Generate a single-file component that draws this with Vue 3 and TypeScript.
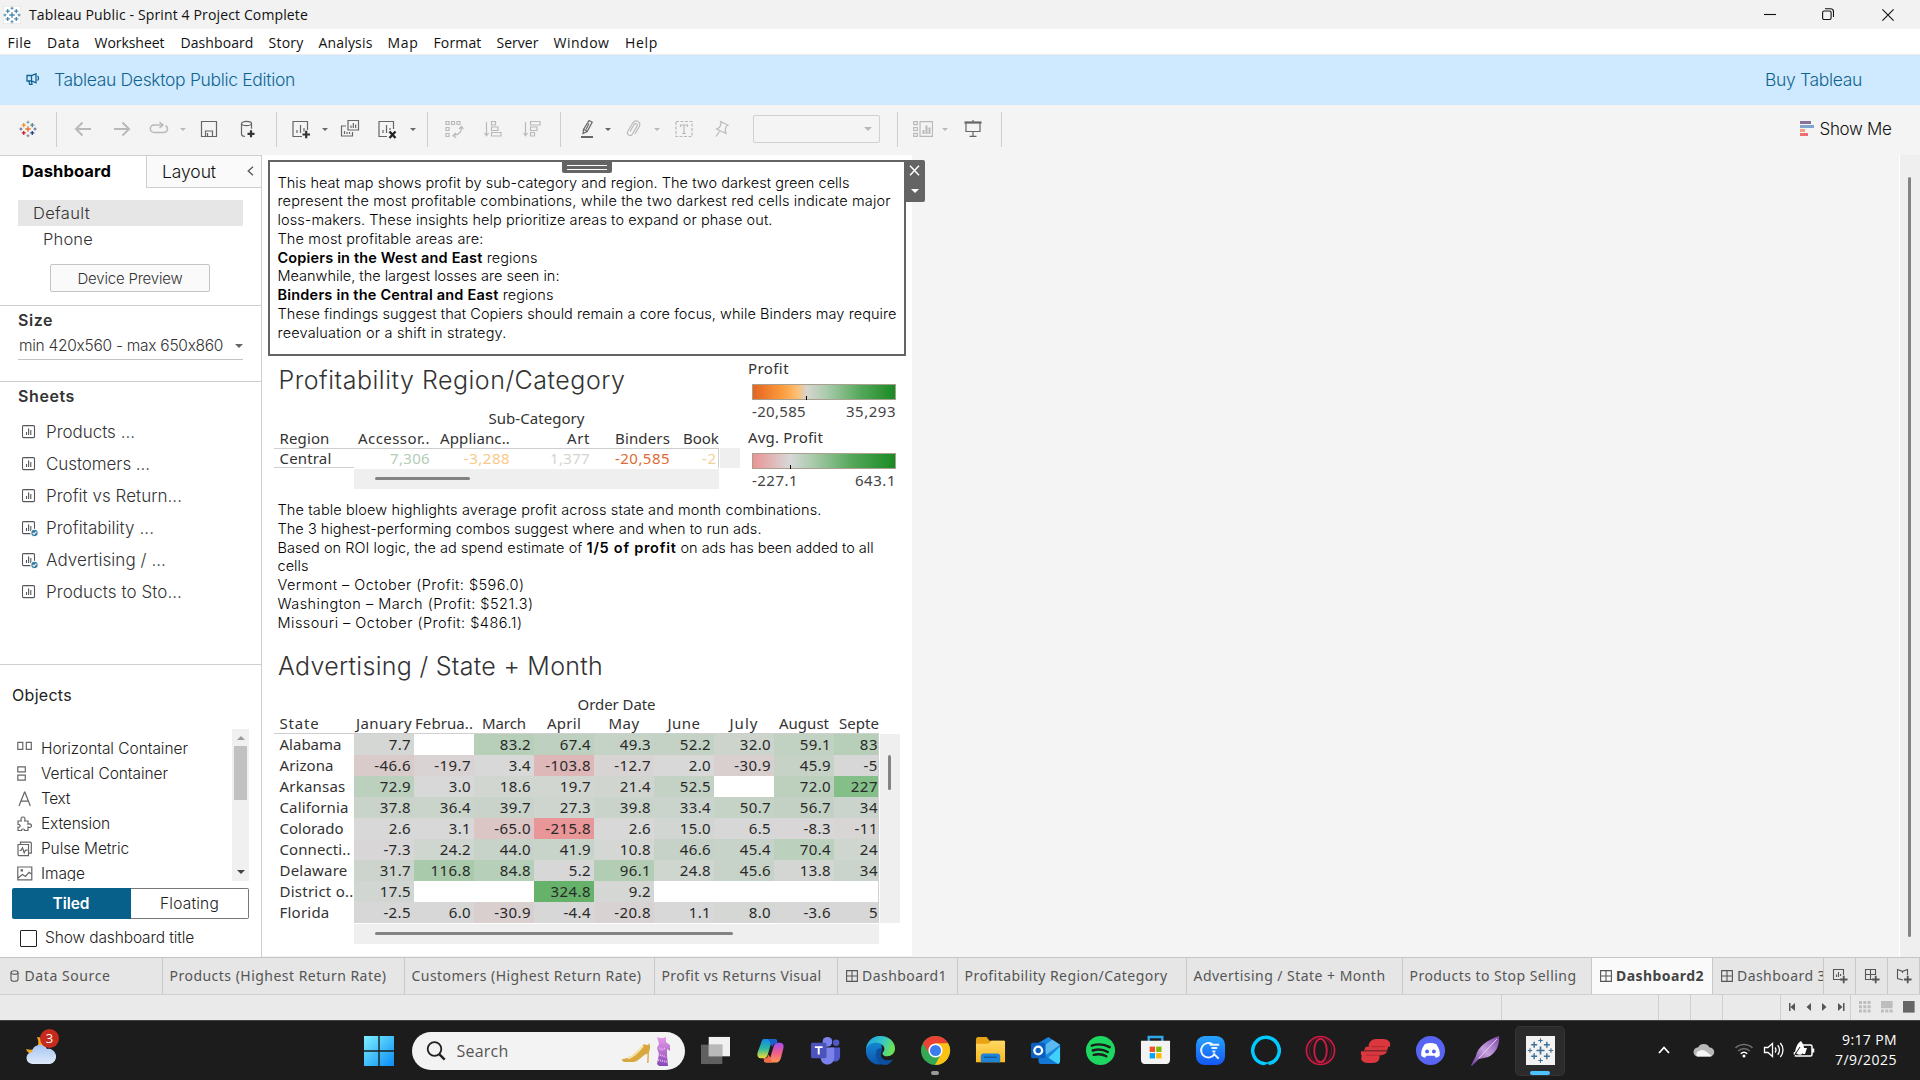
<script setup lang="ts">
import type { Directive } from 'vue'

// Tracks a text run so that it fills the given width in pixels.
const vFit: Directive<HTMLElement, number> = {
  mounted(el, { value }) {
    const n = (el.textContent ?? '').length
    if (!n) return
    const w = el.getBoundingClientRect().width
    el.style.letterSpacing = `${((value - w) / n).toFixed(3)}px`
  },
}

interface Label { t: string; w: number }
interface Segment extends Label { b?: boolean }

const menus: Label[] = [
  { t: 'File', w: 24 }, { t: 'Data', w: 33 }, { t: 'Worksheet', w: 70 }, { t: 'Dashboard', w: 73 },
  { t: 'Story', w: 35 }, { t: 'Analysis', w: 54 }, { t: 'Map', w: 31 }, { t: 'Format', w: 48 },
  { t: 'Server', w: 42 }, { t: 'Window', w: 56 }, { t: 'Help', w: 33 },
]

const logo: [number, number, number, number, string][] = [
  [12, 12, 3.6, 1.5, '#e8762c'], [6.3, 6.8, 2.7, 1.3, '#eb912c'], [17.7, 6.8, 2.7, 1.3, '#59879b'],
  [6.3, 17.2, 2.7, 1.3, '#c72035'], [17.7, 17.2, 2.7, 1.3, '#1f447e'], [12, 3, 2, 1, '#7199a6'],
  [12, 21, 2, 1, '#7b848f'], [2.6, 12, 2, 1, '#5c6692'], [21.4, 12, 2, 1, '#5b6591'],
]
const plus = (x: number, y: number, r: number) => `M${x - r} ${y}h${2 * r}M${x} ${y - r}v${2 * r}`

const sheets = [
  { t: 'Products ...', w: 89, used: false }, { t: 'Customers ...', w: 104, used: false },
  { t: 'Profit vs Return...', w: 136, used: false }, { t: 'Profitability ...', w: 108, used: true },
  { t: 'Advertising / ...', w: 120, used: true }, { t: 'Products to Sto...', w: 136, used: false },
]

const objects = [
  { t: 'Horizontal Container', w: 147, d: 'M.8 1.3h5v7h-5zM9.3 1.3h5v7h-5z' },
  { t: 'Vertical Container', w: 127, d: 'M.8.8h7.5v5h-7.5zM.8 9.2h7.5v5h-7.5z' },
  { t: 'Text', w: 29, d: 'M2 15L7.5 1.2h.4L13.3 15M3.8 10.2h7.8' },
  { t: 'Extension', w: 69, d: 'M1 5h3.3c-1-2.7.3-4 1.7-4s2.7 1.3 1.7 4H11v3.3c2-1 3.5 0 3.5 1.4s-1.5 2.4-3.5 1.4V14.500H7.500c.6-2-3.600-2-3 0H1V11.200c2.800.6 2.800-3.400 0-2.800z' },
  { t: 'Pulse Metric', w: 88, d: 'M1 3.500h10.500v11.200H2.200A1.200 1.200 0 0 1 1 13.500zM3.500 3.300V1.200h9.800a1 1 0 0 1 1 1v9.900h-2.700M2.500 9.500H4l1.500-2.700 1.700 5 1.300-2.700h2' },
  { t: 'Image', w: 44, d: 'M.8 1h14v12.800H.8zM1 12l4.500-3.500 3 2 3.500-4.300 2.600 1.800M4.200 3.800h1.200v1.200H4.200z' },
]

const intro: Segment[][] = [
  [{ t: 'This heat map shows profit by sub-category and region. The two darkest green cells', w: 572 }],
  [{ t: 'represent the most profitable combinations, while the two darkest red cells indicate major', w: 613 }],
  [{ t: 'loss-makers. These insights help prioritize areas to expand or phase out.', w: 495 }],
  [{ t: 'The most profitable areas are:', w: 206 }],
  [{ t: 'Copiers in the West and East', w: 205, b: true }, { t: ' regions', w: 55 }],
  [{ t: 'Meanwhile, the largest losses are seen in:', w: 282 }],
  [{ t: 'Binders in the Central and East', w: 221, b: true }, { t: ' regions', w: 55 }],
  [{ t: 'These findings suggest that Copiers should remain a core focus, while Binders may require', w: 619 }],
  [{ t: 'reevaluation or a shift in strategy.', w: 229 }],
]
const notes: Segment[][] = [
  [{ t: 'The table bloew highlights average profit across state and month combinations.', w: 544 }],
  [{ t: 'The 3 highest-performing combos suggest where and when to run ads.', w: 484 }],
  [{ t: 'Based on ROI logic, the ad spend estimate of ', w: 309 }, { t: '1/5 of profit', w: 90, b: true }, { t: ' on ads has been added to all', w: 197 }],
  [{ t: 'cells', w: 31 }],
  [{ t: 'Vermont – October (Profit: $596.0)', w: 247 }],
  [{ t: 'Washington – March (Profit: $521.3)', w: 256 }],
  [{ t: 'Missouri – October (Profit: $486.1)', w: 245 }],
]

const categories = [
  { t: 'Accessor..', w: 72, v: '7,306', vw: 40, c: '#b3cdb5' },
  { t: 'Applianc..', w: 70, v: '-3,288', vw: 46, c: '#f9c987' },
  { t: 'Art', w: 23, v: '1,377', vw: 40, c: '#d3d6cd' },
  { t: 'Binders', w: 55, v: '-20,585', vw: 55, c: '#dd6a35' },
]

const months: Label[] = [
  { t: 'January', w: 56 }, { t: 'Februa..', w: 58 }, { t: 'March', w: 44 }, { t: 'April', w: 34 },
  { t: 'May', w: 31 }, { t: 'June', w: 33 }, { t: 'July', w: 29 }, { t: 'August', w: 50 }, { t: 'Septe', w: 40 },
]
const states: { t: string; w: number; v: string[] }[] = [
  { t: 'Alabama', w: 62, v: ['7.7', '', '83.2', '67.4', '49.3', '52.2', '32.0', '59.1', '83'] },
  { t: 'Arizona', w: 54, v: ['-46.6', '-19.7', '3.4', '-103.8', '-12.7', '2.0', '-30.9', '45.9', '-5'] },
  { t: 'Arkansas', w: 66, v: ['72.9', '3.0', '18.6', '19.7', '21.4', '52.5', '', '72.0', '227'] },
  { t: 'California', w: 69, v: ['37.8', '36.4', '39.7', '27.3', '39.8', '33.4', '50.7', '56.7', '34'] },
  { t: 'Colorado', w: 64, v: ['2.6', '3.1', '-65.0', '-215.8', '2.6', '15.0', '6.5', '-8.3', '-11'] },
  { t: 'Connecti..', w: 71, v: ['-7.3', '24.2', '44.0', '41.9', '10.8', '46.6', '45.4', '70.4', '24'] },
  { t: 'Delaware', w: 68, v: ['31.7', '116.8', '84.8', '5.2', '96.1', '24.8', '45.6', '13.8', '34'] },
  { t: 'District o..', w: 74, v: ['17.5', '', '', '324.8', '9.2', '', '', '', ''] },
  { t: 'Florida', w: 50, v: ['-2.5', '6.0', '-30.9', '-4.4', '-20.8', '1.1', '8.0', '-3.6', '5'] },
]

const ramp: [number, number[]][] = [
  [-227, [233, 147, 148]], [-104, [222, 184, 185]], [-47, [218, 203, 203]], [0, [216, 216, 216]],
  [50, [197, 210, 198]], [83, [183, 207, 185]], [117, [169, 203, 171]], [227, [132, 190, 136]],
  [325, [103, 178, 107]], [643, [26, 139, 36]],
]
function shade(v: string): string {
  if (!v) return '#ffffff'
  const n = Number(v)
  const i = Math.max(1, ramp.findIndex(([stop]) => n <= stop))
  const [a, ca] = ramp[i - 1]
  const [b, cb] = ramp[i]
  const k = (n - a) / (b - a)
  return `rgb(${ca.map((c, j) => Math.round(c + (cb[j] - c) * k)).join(',')})`
}

const digitWidth = (s: string) => [...s].reduce((n, c) => n + (c === '.' ? 4 : c === '-' ? 5.4 : 9.1), 0)

const tabs = [
  { t: 'Data Source', w: 86, k: 'data' }, { t: 'Products (Highest Return Rate)', w: 217, k: '' },
  { t: 'Customers (Highest Return Rate)', w: 230, k: '' }, { t: 'Profit vs Returns Visual', w: 160, k: '' },
  { t: 'Dashboard1', w: 85, k: 'sheetgrid' }, { t: 'Profitability Region/Category', w: 203, k: '' },
  { t: 'Advertising / State + Month', w: 192, k: '' }, { t: 'Products to Stop Selling', w: 167, k: '' },
  { t: 'Dashboard2', w: 88, k: 'sheetgrid active' }, { t: 'Dashboard 3', w: 89, k: 'sheetgrid' },
]
</script>

<template>
  <div class="screen">
    <header class="titlebar">
      <svg class="appicon" viewBox="0 0 24 24"><rect width="24" height="24" fill="#fff" stroke="#ccc" /><path v-for="(p, i) in logo" :key="i" :d="plus(p[0], p[1], p[2])" stroke="#4a86ad" :stroke-width="p[3] + .3" /></svg>
      <span v-fit="279" class="caption">Tableau Public - Sprint 4 Project Complete</span>
      <div class="winbtns">
        <svg viewBox="0 0 12 12"><path d="M0 5.500h12" /></svg>
        <svg viewBox="0 0 12 12"><rect x=".6" y="3" width="8.500" height="8.500" rx="1.500" /><path d="M3 .7h5.500a3 3 0 0 1 3 3V9" /></svg>
        <svg viewBox="0 0 12 12"><path d="M.4.4l11.200 11.200M11.600.4L.4 11.600" /></svg>
      </div>
    </header>

    <nav class="menubar"><span v-for="m in menus" :key="m.t"><span v-fit="m.w" class="run">{{ m.t }}</span></span></nav>

    <div class="banner">
      <svg class="horn" viewBox="0 0 14 12"><path d="M1 2.500h4.500L10 .8v9L5.500 8H1zM3 8l.6 3.500H6L5.500 8M5.500 2.500V8M11.500 3a3 3 0 0 1 0 4.500" /></svg>
      <span v-fit="241" class="run">Tableau Desktop Public Edition</span>
      <span v-fit="97" class="run buy">Buy Tableau</span>
    </div>

    <div class="toolbar">
      <svg class="logo" viewBox="0 0 24 24"><path v-for="(p, i) in logo" :key="i" :d="plus(p[0], p[1], p[2])" :stroke="p[4]" :stroke-width="p[3] + .4" /></svg>
      <i class="sep" />
      <svg class="ic off thick" viewBox="0 0 20 20"><path d="M18 10H3M9.500 3.500L3 10l6.500 6.500" /></svg>
      <svg class="ic off thick" viewBox="0 0 20 20"><path d="M2 10h15M10.500 3.500L17 10l-6.500 6.500" /></svg>
      <svg class="ic off" viewBox="0 0 20 20"><path d="M13 6H5a3.600 3.600 0 0 0 0 7.400h10A3.600 3.600 0 0 0 16.500 6.600M10.500 3L14 6l-3.500 3" stroke-width="1.500" /></svg>
      <b class="tri off" />
      <svg class="ic" viewBox="0 0 20 20"><path d="M2.500 2.500h15v15h-15zM6.500 17v-5h7v5M8.500 14v3" /></svg>
      <svg class="ic" viewBox="0 0 20 20"><path d="M3.500 4.800v10.500c0 1.200 1.500 2 3.500 2.200M13.500 4.800v5" /><ellipse cx="8.500" cy="4.500" rx="5" ry="2.200" /><path d="M9.500 14.800h7M13 11.300v7" stroke="#333" stroke-width="2.200" /></svg>
      <i class="sep" />
      <svg class="ic" viewBox="0 0 20 20"><path d="M11 17.500H2V2.500h14.500V11M6 14v-3M9.500 14V6M13 12.500V9" /><path d="M11.500 15.500h7.500M15.200 11.800v7.400" stroke="#333" stroke-width="2.200" /></svg>
      <b class="tri" />
      <svg class="ic" viewBox="0 0 20 20"><path d="M8 1.500h10.500v9.500H8zM6 7H1.500v10h11v-4M11 9V6.500M13.300 9V4M15.600 9V5.500M4.500 15v-3M7 15v-2M9.500 15v-2" /></svg>
      <svg class="ic" viewBox="0 0 20 20"><path d="M10 17.500H2V2.500h14.500V10M6 14v-3M9.500 14V6M13 11V9" /><path d="M12.500 12.500l6 6.500M18.500 12.500l-6 6.500" stroke="#222" stroke-width="2.300" /></svg>
      <b class="tri" />
      <i class="sep" />
      <svg class="ic off" viewBox="0 0 20 20"><path d="M2 2.500h3v3H2zM7.500 2.500h3v3h-3zM13 2.500h3v3h-3zM2 8.500h3v3H2zM2 14.500h3v3H2zM17.500 8c.5 4.500-2 7.500-8 8.500M15 10l2.500-2.500L19.500 10M12 14l-3 2.700 3.200 2" /></svg>
      <svg class="ic off" viewBox="0 0 20 20"><path d="M3.500 3v13M1.500 14l2 2.700L5.500 14M8.500 2.500h4v3.500h-4zM8.500 8h6.500v3.500H8.500zM8.500 13.500h9.500V17H8.500z" /></svg>
      <svg class="ic off" viewBox="0 0 20 20"><path d="M3.500 3v13M1.500 14l2 2.700L5.500 14M8.500 2.500h9.500v3.500H8.500zM8.500 8h6.500v3.500H8.500zM8.500 13.500h4V17h-4z" /></svg>
      <i class="sep" />
      <svg class="ic" viewBox="0 0 20 20"><path d="M12 1.500l3.200 1.700-5 9.300L6 14.500 6.500 10.500zM7 10.500l3 1.700M12 4.500l-3 6" /><path d="M4 18h12" stroke-width="2" /></svg>
      <b class="tri" />
      <svg class="ic off" viewBox="0 0 20 20"><path d="M7 12.500l4-7c1.300-2 4 -.5 3 1.500l-4.500 8c-2 3.200-6.500.5-4.800-2.500l5-8.500c3-4.500 9-.8 6.500 3.500L12 15" /></svg>
      <b class="tri off" />
      <svg class="ic off" viewBox="0 0 20 20"><path d="M2 2.500h16v15H2z" stroke-dasharray="3 1.500" /><path d="M6.500 8V6h7v2M10 6v8.500M8 14.500h4" /></svg>
      <svg class="ic off" viewBox="0 0 20 20"><path d="M9.500 2.500l7.500 3.500-2 1.500-.8 4 .8 3-9.500-4.500 3-1.500 1.500-3.500zM8.500 12.500L5 17.500" /></svg>
      <div class="combo"><b class="tri off big" /></div>
      <i class="sep" />
      <svg class="ic off" viewBox="0 0 20 20"><path d="M.7 2.700h3.600v3H.7zM.7 8.500h3.600v3H.7zM.7 14.300h3.600v3H.7zM7 2.700h12.500v14.600H7z" /><path d="M10.500 15v-4M13.500 15V6.500M16.500 15V8.500" stroke-width="2" /></svg>
      <b class="tri off" />
      <svg class="ic" viewBox="0 0 20 20"><path d="M1.500 3.500h17" stroke-width="2.200" /><path d="M3 4v8.500h14V4M10 12.500V17M6.500 17.300h7M10 1v2" /></svg>
      <i class="sep" />
      <div class="showme">
        <svg width="15" height="16" viewBox="0 0 15 16"><path d="M0 0h11v3H0z" fill="#87719b" /><path d="M0 4h14v3H0z" fill="#80a4cd" /><path d="M0 8h5v3H0z" fill="#f2a37f" /><path d="M0 12h8v3H0z" fill="#f36b77" /></svg>
        <span v-fit="72" class="run">Show Me</span>
      </div>
    </div>

    <main class="work">
      <aside class="panel">
        <div class="ptabs">
          <div class="ptab on"><span v-fit="89" class="run">Dashboard</span></div>
          <div class="ptab"><span v-fit="54" class="run">Layout</span><svg width="7" height="10" viewBox="0 0 7 10"><path d="M6 .7L1.200 5 6 9.300" /></svg></div>
        </div>
        <div class="device on"><span v-fit="57" class="run">Default</span></div>
        <div class="device phone"><span v-fit="50" class="run">Phone</span></div>
        <button class="preview"><span v-fit="105" class="run">Device Preview</span></button>
        <section class="size">
          <h3><span v-fit="35" class="run">Size</span></h3>
          <div class="select"><span v-fit="208" class="run">min 420x560 - max 650x860</span><b class="tri big" /></div>
        </section>
        <section class="sheets">
          <h3><span v-fit="57" class="run">Sheets</span></h3>
          <div v-for="s in sheets" :key="s.t" class="sheet">
            <svg width="17" height="17" viewBox="0 0 17 17"><path d="M1.500.6h10a1 1 0 0 1 1 1v10a1 1 0 0 1-1 1h-10a1 1 0 0 1-1-1v-10a1 1 0 0 1 1-1zM4.500 10V7M6.600 10V3.500M8.800 10V5" /><g v-if="s.used"><circle cx="12.500" cy="12" r="3.700" fill="#3a7fa3" stroke="#fff" /><path d="M10.700 12l1.300 1.300 2.400-2.600" stroke="#fff" /></g></svg>
            <span v-fit="s.w" class="run">{{ s.t }}</span>
          </div>
        </section>
        <section class="objects">
          <h4><span v-fit="60" class="run">Objects</span></h4>
          <div class="olist">
            <div class="oitems">
              <div v-for="o in objects" :key="o.t" class="obj">
                <svg width="16" height="16" viewBox="0 0 16 16"><path :d="o.d" /></svg><span v-fit="o.w" class="run">{{ o.t }}</span>
              </div>
            </div>
            <div class="obar"><b class="up" /><div class="othumb" /><b class="down" /></div>
          </div>
          <div class="mode"><div class="m on"><span v-fit="37" class="run">Tiled</span></div><div class="m"><span v-fit="59" class="run">Floating</span></div></div>
          <label class="check"><i /><span v-fit="149" class="run">Show dashboard title</span></label>
        </section>
      </aside>

      <div class="canvas">
        <div class="board">
          <div class="selbox">
            <p v-for="(line, i) in intro" :key="i"><span v-for="s in line" :key="s.t" v-fit="s.w" :class="{ strong: s.b }">{{ s.t }}</span></p>
            <div class="grip" />
            <div class="boxtools"><svg width="11" height="11" viewBox="0 0 11 11"><path d="M1 .8l9 9.400M10 .8L1 10.200" /></svg><b /></div>
          </div>

          <div class="row1">
            <div class="viz profit">
              <h2><span v-fit="347" class="run">Profitability Region/Category</span></h2>
              <div class="axis"><span v-fit="96" class="run">Sub-Category</span></div>
              <div class="heads">
                <div class="rowhead"><span v-fit="50" class="run">Region</span></div>
                <div v-for="c in categories" :key="c.t" class="cat"><span v-fit="c.w" class="run">{{ c.t }}</span></div>
                <div class="cat last"><span v-fit="43" class="run">Bookc</span></div>
              </div>
              <div class="vals">
                <div class="rowhead"><span v-fit="52" class="run">Central</span></div>
                <div v-for="c in categories" :key="c.t" class="cat" :style="{ color: c.c }"><span v-fit="c.vw" class="run">{{ c.v }}</span></div>
                <div class="cat last2"><span v-fit="15" class="run">-2</span></div>
                <div class="vtrack" />
              </div>
              <div class="htrack"><i /></div>
            </div>
            <div class="legends">
              <div class="ltitle"><span v-fit="41" class="run">Profit</span></div>
              <div class="gradient g1"><i /></div>
              <div class="range"><span v-fit="54" class="run">-20,585</span><span v-fit="50" class="run">35,293</span></div>
              <div class="ltitle"><span v-fit="75" class="run">Avg. Profit</span></div>
              <div class="gradient g2"><i /></div>
              <div class="range"><span v-fit="46" class="run">-227.1</span><span v-fit="41" class="run">643.1</span></div>
            </div>
          </div>

          <div class="notes"><p v-for="(line, i) in notes" :key="i"><span v-for="s in line" :key="s.t" v-fit="s.w" :class="{ strong: s.b }">{{ s.t }}</span></p></div>

          <div class="viz adv">
            <h2><span v-fit="325" class="run">Advertising / State + Month</span></h2>
            <div class="axis"><span v-fit="78" class="run">Order Date</span></div>
            <div class="heads">
              <div class="rowhead"><span v-fit="40" class="run">State</span></div>
              <div v-for="m in months" :key="m.t" class="mon"><span v-fit="m.w" class="run">{{ m.t }}</span></div>
            </div>
            <div class="body">
              <div class="grid">
                <div v-for="s in states" :key="s.t" class="srow">
                  <div class="rowhead"><span v-fit="s.w" class="run">{{ s.t }}</span></div>
                  <div v-for="(v, i) in s.v" :key="i" class="cell" :style="{ background: shade(v) }"><span v-if="v" v-fit="digitWidth(v)" class="run">{{ v }}</span></div>
                </div>
              </div>
              <div class="vtrack"><i /></div>
            </div>
            <div class="htrack"><i /></div>
          </div>
        </div>
        <div class="pagebar"><i /></div>
      </div>
    </main>

    <div class="tabs">
      <div v-for="t in tabs" :key="t.t" class="tab" :class="t.k">
        <svg v-if="t.k === 'data'" width="9" height="12" viewBox="0 0 9 12"><ellipse cx="4.500" cy="2.500" rx="3.500" ry="1.800" /><path d="M1 2.500v7c0 2.300 7 2.300 7 0v-7" /></svg>
        <svg v-else-if="t.k" width="12" height="12" viewBox="0 0 12 12"><path d="M.6.6h10.800v10.800H.6zM6 .6v10.800M.6 6h10.800" /></svg>
        <span v-fit="t.w" class="run">{{ t.t }}</span>
      </div>
      <div class="tab add"><svg width="16" height="16" viewBox="0 0 16 16"><path d="M8 11.500H1.500V1.500h10V7M4.500 9V6.500M6.500 9V4M8.600 8V6" /><path d="M8 11.500h7.500M11.700 7.700v7.500" stroke-width="1.800" /></svg></div>
      <div class="tab add"><svg width="16" height="16" viewBox="0 0 16 16"><path d="M8 11.500H1.500V1.500h10V7M6.500 1.500v10M1.500 6.500h10" /><path d="M8 11.500h7.500M11.700 7.700v7.500" stroke-width="1.800" /></svg></div>
      <div class="tab add"><svg width="16" height="16" viewBox="0 0 16 16"><path d="M7 12L1.500 10.500v-9L6.500 3.300 11.500 1.500V7M6.500 3.300V5" /><path d="M8 11.500h7.500M11.700 7.700v7.500" stroke-width="1.800" /></svg></div>
    </div>

    <div class="status">
      <i /><i /><i /><i /><i />
      <div class="pager">
        <svg width="64" height="10" viewBox="0 0 64 10"><path d="M5.500 5L10 1v8zM4 1h1.500v8H4zM21.500 5L26 1v8zM41.500 5L37 1v8zM57.500 5L53 1v8zM58 1h1.500v8H58z" /></svg>
      </div>
      <div class="views">
        <svg width="12" height="12" viewBox="0 0 12 12" fill="#bdbdbd"><path d="M0 0h3v3H0zM4.300 0h3v3h-3zM8.600 0h3v3h-3zM0 4.300h3v3H0zM4.300 4.300h3v3h-3zM8.600 4.300h3v3h-3zM0 8.600h3v3H0zM4.300 8.600h3v3h-3zM8.600 8.600h3v3h-3z" /></svg>
        <svg width="12" height="12" viewBox="0 0 12 12" fill="#bdbdbd"><path d="M0 0h11.600v7.300H0zM0 8.600h3v3H0zM4.300 8.600h3v3h-3zM8.600 8.600h3v3h-3z" /></svg>
        <svg width="12" height="12" viewBox="0 0 12 12" fill="#666"><path d="M0 0h11.600v11.600H0z" /></svg>
      </div>
    </div>

    <footer class="taskbar">
      <svg width="0" height="0" class="defs"><defs>
        <linearGradient id="win" x1="0" y1="0" x2="1" y2="1"><stop stop-color="#7df0ff" /><stop offset="1" stop-color="#0a8cf5" /></linearGradient>
        <linearGradient id="cloud" x1="0" y1="0" x2="0" y2="1"><stop stop-color="#a5c4ef" /><stop offset="1" stop-color="#dfeafb" /></linearGradient>
        <linearGradient id="copA" x1="0" y1="0" x2="0" y2="1"><stop stop-color="#1287ea" /><stop offset=".5" stop-color="#2bb8a0" /><stop offset="1" stop-color="#f4dc2e" /></linearGradient>
        <linearGradient id="copB" x1="0" y1="0" x2="0" y2="1"><stop stop-color="#a24df2" /><stop offset=".5" stop-color="#ef5d8c" /><stop offset="1" stop-color="#ff9a4b" /></linearGradient>
        <linearGradient id="edgeA" x1="0" y1="0" x2="1" y2=".3"><stop stop-color="#1b9fde" /><stop offset=".6" stop-color="#36c6c9" /><stop offset="1" stop-color="#6be05a" /></linearGradient>
        <linearGradient id="edgeB" x1="0" y1="0" x2="0" y2="1"><stop stop-color="#1794de" /><stop offset="1" stop-color="#0d55ab" /></linearGradient>
        <linearGradient id="fold" x1="0" y1="0" x2="0" y2="1"><stop stop-color="#ffd866" /><stop offset="1" stop-color="#fbb91c" /></linearGradient>
        <linearGradient id="blue" x1="0" y1="0" x2="0" y2="1"><stop stop-color="#27a3fb" /><stop offset="1" stop-color="#1457f5" /></linearGradient>
        <linearGradient id="quill" x1="1" y1="0" x2="0" y2="1"><stop stop-color="#7d45a8" /><stop offset=".5" stop-color="#c6a0dd" /><stop offset="1" stop-color="#6b3598" /></linearGradient>
        <linearGradient id="dress" x1="0" y1="0" x2="0" y2="1"><stop stop-color="#e79ae9" /><stop offset="1" stop-color="#8449b5" /></linearGradient>
      </defs></svg>
      <div class="weather">
        <svg width="40" height="40" viewBox="0 0 40 40"><path d="M13 7c4 9-1 15-11 12 2 5 8 8 14 6s8-10 5-14c-2-3-5-4-8-4z" fill="#f3a51f" /><path d="M8 34a6 6 0 0 1-1-12 8 8 0 0 1 15-3 7 7 0 0 1 3 15z" fill="url(#cloud)" transform="translate(1 0)" /></svg>
        <span class="bubble">3</span>
      </div>
      <div class="start"><svg width="30" height="30" viewBox="0 0 30 30" fill="url(#win)"><path d="M0 0h14.300v14.300H0zM15.700 0H30v14.300H15.700zM0 15.700h14.300V30H0zM15.700 15.700H30V30H15.700z" /></svg></div>
      <div class="search">
        <svg width="20" height="20" viewBox="0 0 20 20"><circle cx="8.500" cy="8" r="6.800" /><path d="M13.200 13.200l5.500 5.500" stroke-width="2.500" /></svg>
        <span v-fit="52" class="run">Search</span>
        <svg class="promo" width="52" height="30" viewBox="0 0 52 30"><path d="M1 23c6 0 13-4 22-15 3 2 5 1 5-1 2 3 1 6 0 9l-.5 11h-1.300l.3-9.500c-5 1-8 8-14 8.500H4c-2 0-3-1-3-3z" fill="#d9a73f" /><path d="M7 22.500c6-2 10-6 15-12.500" stroke="#f7e2a4" stroke-width="2" fill="none" /><path d="M36 1l3 1h3l3-1v5l4 3v6l-3-2v6l1 11h-9l-2-2 2-10-2-6 2-4z" fill="url(#dress)" /><path d="M38 12l3 2 3-2M37 18l8 3M37 24l9 2" stroke="#f0b6f0" stroke-dasharray="1 1" fill="none" /></svg>
      </div>
      <div class="app"><svg viewBox="0 0 32 32"><path d="M9 2h22v20H9z" fill="#f1f1f1" /><path d="M1 10h22v20H1z" fill="#777" fill-opacity=".75" /><path d="M9 10h14v12H9z" fill="#b9b9b9" /></svg></div>
      <div class="app"><svg viewBox="0 0 32 32"><path d="M10 4h10c3 0 3 2 2.300 4L18 9c-2 0-2 1-2.500 3L13 21c-1 2-2 3-4 3H6c-4 0-4-4-3-7L6 9c1-4 2-5 4-5z" fill="url(#copA)" /><path d="M22 28.500H12c-3 0-3-2-2.300-4L14 24c2 0 2-1 2.500-3l3-10c.7-2 2-3 4-3H26c4 0 4 4 3 7l-2 8c-1 4-3 5.500-5 5.500z" fill="url(#copB)" /><path d="M13 4h6c3 0 4 2 4.500 4.500-4 0-4.500 1-5.500 4L16 9c-1-3-1-4-3-5z" fill="#1b5fd0" /><path d="M19 28.500h-6c-2 0-3.500-1.500-4.500-4.500 4 0 4.500-1 5.500-4l2 4c1 3 1 4 3 4.500z" fill="#f26a4c" /></svg></div>
      <div class="app"><svg viewBox="0 0 32 32"><circle cx="18" cy="7" r="5" fill="#7b83eb" /><circle cx="27" cy="8" r="3.300" fill="#5059c9" /><path d="M21 13h10v9c0 6-7 7-9 3z" fill="#5059c9" /><path d="M11 13h14v10c0 10-14 10-14 0z" fill="#7b83eb" /><rect x="1" y="8" width="16" height="16" rx="1.500" fill="#4b53bc" /><path d="M5 12.500h8M9 12.500V20" stroke="#fff" stroke-width="2" /></svg></div>
      <div class="app"><svg viewBox="0 0 32 32"><path d="M16 1a15 15 0 0 0-15 15 14 14 0 0 0 12 14.500L24 30c-6-1-9-5-8-10 .3-2 1-3 1.500-5z" fill="url(#edgeB)" /><path d="M1 15C2 6 8 1 16 1c9 0 15 6 15 13 0 5-4 8-8 8-3 0-5-1.500-5-3 0-1 2-2 2-4.500C20 10 15 8 11 8S3 10 1 15z" fill="url(#edgeA)" /><path d="M12 16c-3 8 2 15 10 15 3-1 5-3 7-6-7 3-13 0-13-6 0-2 1-3 2-5-3-1-5 0-6 2z" fill="#0b4fa0" /></svg></div>
      <div class="app"><svg viewBox="0 0 32 32"><circle cx="16" cy="16" r="15" fill="#34a853" /><path d="M16 16L3 8.500A15 15 0 0 1 29 8.500z" fill="#ea4335" /><path d="M16 8.500h13A15 15 0 0 1 15.500 31L22 19z" fill="#fbc116" /><path d="M3 8.500L9.500 19 16 8.500z" fill="#ea4335" /><circle cx="16" cy="16" r="7.300" fill="#fff" /><circle cx="16" cy="16" r="5.700" fill="#3b7ded" /></svg><i class="dot" /></div>
      <div class="app"><svg viewBox="0 0 32 32"><path d="M1 5c0-2 1-3 2-3h9l3 4h16v5H1z" fill="#e8a215" /><path d="M1 9h13l3-3h13l1 1v21H1z" fill="url(#fold)" /><path d="M6 28v-6c0-2 1-3 3-3h14c2 0 3 1 3 3v6z" fill="#1f83d8" /><path d="M9.500 23h13" stroke="#0b5ba5" stroke-width="1.500" /></svg></div>
      <div class="app"><svg viewBox="0 0 32 32"><path d="M9 8L19 2l12 8v18H9z" fill="#1b86dc" /><path d="M13 12L23 5l8 5-14 10z" fill="#5bb9f2" /><path d="M31 12v14c0 3-1 4-3 4H12z" fill="#3fd0fb" /><path d="M9 17l20 13H12c-2 0-3-1-3-3z" fill="#1477d3" /><rect x="1" y="8" width="15" height="16" rx="2" fill="#0b5fc0" /><circle cx="8.500" cy="16" r="4" fill="none" stroke="#fff" stroke-width="2.400" /></svg></div>
      <div class="app"><svg viewBox="0 0 32 32"><circle cx="16" cy="16" r="15" fill="#1ed760" /><path d="M7 11c6-2 13-1.500 18.500 1.500M8 16c5-1.500 11-1 15.500 1.500M9 20.500c4-1 9-.8 13 1.500" stroke="#1c1c1c" stroke-width="2.500" stroke-linecap="round" fill="none" /></svg></div>
      <div class="app"><svg viewBox="0 0 32 32"><path d="M9 8V2h14v6" fill="none" stroke="#2ea8ea" stroke-width="2.500" /><path d="M1 6h30v19c0 4-2 5-5 5H6c-3 0-5-1-5-5z" fill="#f3f3f3" /><path d="M10 12h5.500v5.500H10z" fill="#f25022" /><path d="M16.700 12h5.500v5.500h-5.500z" fill="#7fba00" /><path d="M10 18.700h5.500v5.500H10z" fill="#00a4ef" /><path d="M16.700 18.700h5.500v5.500h-5.500z" fill="#ffb900" /></svg></div>
      <div class="app"><svg viewBox="0 0 32 32"><rect x="1" y="1" width="30" height="30" rx="9" fill="url(#blue)" /><path d="M18 9.500A7.500 7.500 0 1 0 20 20M19 19l5.500 5.500M15 10h10M17 13.500h6M18 17h3" fill="none" stroke="#e9f4ff" stroke-width="2" /></svg></div>
      <div class="app"><svg viewBox="0 0 32 32"><path d="M14 29.500A13.700 13.700 0 1 1 19 29.500" fill="none" stroke="#00caff" stroke-width="3.600" /><path d="M12 27.500l9 1-7 3z" fill="#00caff" /></svg></div>
      <div class="app"><svg viewBox="0 0 32 32" fill="none" stroke="#cf1b43" stroke-width="1.700"><circle cx="16" cy="16" r="14.500" /><ellipse cx="16" cy="16" rx="11.500" ry="13.500" stroke="#7a1630" stroke-width="1" /><ellipse cx="16" cy="16" rx="6.500" ry="12" stroke-width="1.900" /></svg></div>
      <div class="app"><svg viewBox="0 0 32 32" fill="#da373f"><path d="M9 10c1-4 4-6 9-6h6c6 0 8 4 7 8h-2l-1 4H4l2-4h3z" /><path d="M1 16.800h27c-1 2.500-3 4-6 4h-2c1 5-2 8-7 8H8c-6 0-8-4-6-8h-1z" /><path d="M12 12h14M6 20.800h13" stroke="#9f2229" stroke-width=".7" /></svg></div>
      <div class="app"><svg viewBox="0 0 32 32"><circle cx="16" cy="16" r="15" fill="#5865f2" /><path d="M10 9.500c4-1.500 8-1.500 12 0 3 4 4 8 3.500 12-2 1.500-3 1.800-4 2l-1.200-2h-8.600l-1.200 2c-1-.2-2-.5-4-2C6 17.500 7 13.500 10 9.500z" fill="#fff" /><circle cx="12.500" cy="17" r="2" fill="#5865f2" /><circle cx="19.500" cy="17" r="2" fill="#5865f2" /></svg></div>
      <div class="app"><svg viewBox="0 0 32 32"><path d="M30 1c1 10-4 19-12 22l-5 1-4 1-7 7-1-1 5-9C8 12 18 5 30 1z" fill="url(#quill)" /><path d="M28 4L9 24" stroke="#ead5f5" /></svg></div>
      <div class="app sel"><svg viewBox="0 0 32 32"><path d="M1 1h30v30H1z" fill="#f2f2f2" /><g transform="translate(2.200 2.200) scale(1.150)"><path v-for="(p, i) in logo" :key="i" :d="plus(p[0], p[1], p[2])" stroke="#3f7196" :stroke-width="p[3]" /></g></svg><i class="bar" /></div>
      <div class="tray">
        <svg width="14" height="14" viewBox="0 0 14 14"><path d="M2 10l5-5.500L12 10" stroke="#fff" stroke-width="1.800" /></svg>
        <svg width="22" height="16" viewBox="0 0 22 16"><path d="M5 14.500a4.500 4.500 0 0 1 0-9 6.500 6.500 0 0 1 11.500 0A4.500 4.500 0 0 1 17 14.500z" fill="#b9b9b9" /><path d="M4 14.500a3.500 3.500 0 0 1 2-5.500c5-3 8 2 13 5-1 .5-1.500.5-2.500.5z" fill="#f5f5f5" /></svg>
        <svg width="20" height="18" viewBox="0 0 20 18" fill="none" stroke-width="1.600"><path d="M1.500 7a12 12 0 0 1 17 0M4.200 10a8.300 8.300 0 0 1 11.600 0" stroke="#6c6c6c" /><path d="M6.800 12.700a4.600 4.600 0 0 1 6.400 0" stroke="#fff" /><circle cx="10" cy="15" r="1.500" fill="#fff" /></svg>
        <svg width="22" height="18" viewBox="0 0 22 18" fill="none" stroke="#fff" stroke-width="1.300"><path d="M1.500 6.500H5L9.500 2.500v13L5 11.500H1.500zM12 6.500a4 4 0 0 1 0 5M14.700 4.300a7 7 0 0 1 0 9.400M17.300 2a10.500 10.500 0 0 1 0 14" /></svg>
        <svg width="22" height="20" viewBox="0 0 22 20"><path d="M8 5h9.500a1.500 1.500 0 0 1 1.500 1.500v8a1.500 1.500 0 0 1-1.500 1.500H3a1.500 1.500 0 0 1-1.500-1.500V12M20.500 8.500v4" fill="none" stroke="#fff" stroke-width="1.500" /><path d="M10 8h4l-2 6h-2z" fill="#fff" /><path d="M2 12c1-6 3-9 6-11 3 4 4 8 2 12-2 3-6 2-8-1z" fill="#fff" /><path d="M1 16l6-9" stroke="#1c1c1c" /></svg>
      </div>
      <div class="clock"><div><span v-fit="55" class="run">9:17 PM</span></div><div><span v-fit="62" class="run">7/9/2025</span></div></div>
    </footer>
  </div>
</template>

<style>
html, body { margin: 0; overflow: hidden; }
</style>

<style scoped>
.screen { width: 1920px; height: 1080px; display: flex; flex-direction: column; background: #f4f4f4; color: #333; font-family: Inter, "Noto Sans", sans-serif; font-weight: 300; overflow: hidden; }
.screen * { box-sizing: border-box; }
svg { display: block; flex: none; }
.run { white-space: pre; display: inline-block; }
h2, h3, h4, p { margin: 0; }
.strong { font-weight: 600; }

.titlebar { height: 29px; flex: none; display: flex; align-items: center; background: #f2f2f2; color: #111; font: 400 14px/29px "Open Sans", sans-serif; }
.appicon { width: 18px; height: 18px; margin: 0 8px 0 3px; fill: none; }
.caption { white-space: pre; }
.winbtns { margin-left: auto; margin-right: 26px; display: flex; gap: 47px; }
.winbtns svg { width: 12px; height: 12px; fill: none; stroke: #111; stroke-width: 1.100; }
.winbtns svg:nth-child(2) { margin: -1px 1px 0 -1px; }

.menubar { height: 26px; flex: none; display: grid; grid-template-columns: 39.500px 47.500px 86px 88px 50px 69px 46px 63px 57px 71.500px 40px; padding-left: 7.500px; background: #fff; border-bottom: 1px solid #ececec; color: #111; font: 400 14px/27px "Open Sans", sans-serif; }

.banner { height: 50px; flex: none; display: flex; align-items: center; padding-bottom: 1.500px; background: #cfe9ff; color: #10658f; font-size: 17.500px; }
.horn { width: 14px; height: 12px; margin: 0 14px 0 26px; fill: none; stroke: #10658f; stroke-width: 1.300; }
.buy { margin-left: auto; margin-right: 58px; }

.toolbar { height: 50px; flex: none; display: flex; align-items: center; padding-bottom: 2px; background: #f4f4f4; }
.toolbar > * { flex: none; }
.ic { width: 20px; height: 20px; fill: none; stroke: #666; stroke-width: 1.200; }
.ic.off { stroke: #b9b9b9; }
.ic.thick { stroke-width: 2; }
.sep { width: 1px; height: 35px; background: #cfcfcf; }
.tri { width: 0; height: 0; border: 3px solid transparent; border-top: 3px solid #666; border-bottom: 0; }
.tri.off { border-top-color: #b9b9b9; }
.tri.big { border-width: 4px; border-bottom: 0; }
.logo { width: 18px; height: 18px; fill: none; }
.toolbar > :nth-child(1) { margin-left: 18.500px; }
.toolbar > :nth-child(2) { margin-left: 19px; }
.toolbar > :nth-child(3) { margin-left: 16px; }
.toolbar > :nth-child(4) { margin-left: 19px; }
.toolbar > :nth-child(5) { margin-left: 17px; }
.toolbar > :nth-child(6) { margin-left: 11.500px; }
.toolbar > :nth-child(7) { margin-left: 12.500px; }
.toolbar > :nth-child(8) { margin-left: 19px; }
.toolbar > :nth-child(9) { margin-left: 18px; }
.toolbar > :nth-child(10) { margin-left: 14px; }
.toolbar > :nth-child(11) { margin-left: 11.500px; }
.toolbar > :nth-child(12) { margin-left: 12px; }
.toolbar > :nth-child(13) { margin-left: 17px; }
.toolbar > :nth-child(14) { margin-left: 13px; }
.toolbar > :nth-child(15) { margin-left: 11px; }
.toolbar > :nth-child(16) { margin-left: 15.500px; }
.toolbar > :nth-child(17) { margin-left: 19px; }
.toolbar > :nth-child(18) { margin-left: 19px; }
.toolbar > :nth-child(19) { margin-left: 18px; }
.toolbar > :nth-child(20) { margin-left: 16px; }
.toolbar > :nth-child(21) { margin-left: 8.500px; }
.toolbar > :nth-child(22) { margin-left: 12px; }
.toolbar > :nth-child(23) { margin-left: 11px; }
.toolbar > :nth-child(24) { margin-left: 14px; }
.toolbar > :nth-child(25) { margin-left: 17px; }
.toolbar > :nth-child(26) { margin-left: 22px; }
.toolbar > :nth-child(27) { margin-left: 16.500px; }
.toolbar > :nth-child(28) { margin-left: 15.500px; }
.toolbar > :nth-child(29) { margin-left: 8.500px; }
.toolbar > :nth-child(30) { margin-left: 15px; }
.toolbar > :nth-child(31) { margin-left: 18.500px; }
.combo { width: 127px; height: 28px; border: 1px solid #d0d0d0; border-radius: 2px; display: flex; align-items: center; justify-content: flex-end; padding-right: 7px; }
.toolbar .showme { margin-left: auto; margin-right: 28.500px; display: flex; align-items: center; gap: 5px; color: #111; font-size: 17px; }

.work { height: 802px; flex: none; display: flex; }
.panel { width: 262px; height: 802px; flex: none; background: #fff; border-right: 1px solid #cfcfcf; border-top: 1px solid #cfcfcf; display: flex; flex-direction: column; }
.ptabs { height: 32px; flex: none; display: flex; }
.ptab { flex: 1; display: flex; align-items: center; padding: 0 7px 0 15px; justify-content: space-between; background: #fafafa; border: solid #cfcfcf; border-width: 0 0 1px 1px; font-size: 17.500px; color: #111; }
.ptab.on { flex: none; width: 146px; padding: 0 0 3px 22px; background: #fff; border: 0; font-weight: 700; font-size: 16.500px; color: #000; }
.ptab svg { fill: none; stroke: #555; stroke-width: 1.300; margin-top: -2px; }
.device { height: 26px; margin: 12px 18px 0; padding-left: 15px; line-height: 26px; font-size: 16.500px; }
.device.on { background: #e6e6e6; }
.device.phone { margin-top: 0; padding-left: 25px; }
.preview { width: 160px; height: 28px; margin: 12px 0 13px 50px; padding: 1px 0 0; border: 1px solid #c4c4c4; border-radius: 2px; background: #fafafa; font: 300 15px/25px Inter, sans-serif; color: #333; }
.size { height: 76px; border-top: 1px solid #cfcfcf; padding: 2px 18px 0; }
h3 { font-size: 16px; line-height: 24px; font-weight: 600; }
.select { height: 28px; display: flex; align-items: center; justify-content: space-between; border-bottom: 1px solid #c4c4c4; padding-left: 1px; font-size: 15.500px; }
.sheets { height: 283px; border-top: 1px solid #cfcfcf; padding: 2px 18px 0; }
.sheets h3 { margin-bottom: 8px; }
.sheet { height: 32px; display: flex; align-items: center; gap: 7px; padding-left: 4px; font-size: 17px; }
.sheet svg { fill: none; stroke: #555; stroke-width: 1.100; margin-top: 3px; }
.objects { flex: 1; border-top: 1px solid #cfcfcf; padding: 17px 12px 0; color: #222; }
h4 { font-size: 16px; line-height: 26px; font-weight: 400; }
.olist { height: 152px; margin-top: 21px; display: flex; overflow: hidden; }
.oitems { flex: 1; padding-top: 7px; }
.obj { height: 25px; display: flex; align-items: center; gap: 8px; padding-left: 5px; font-size: 15.500px; }
.obj svg { fill: none; stroke: #666; stroke-width: 1.200; }
.obar { width: 17px; background: #f0f0f0; display: flex; flex-direction: column; align-items: center; }
.up { border: 4px solid transparent; border-bottom: 4px solid #9a9a9a; border-top: 0; margin: 7px 0 6px; }
.down { border: 4px solid transparent; border-top: 4px solid #444; border-bottom: 0; margin: auto 0 7px; }
.othumb { width: 13px; height: 54px; background: #c1c1c1; }
.mode { height: 31px; margin-top: 7px; display: flex; }
.m { width: 118px; display: flex; align-items: center; justify-content: center; border: 1px solid #777; border-left: 0; border-radius: 0 2px 2px 0; font-size: 15.500px; }
.m.on { width: 119px; background: #06608a; color: #fff; border: 0; border-radius: 2px 0 0 2px; font-weight: 600; padding-right: 1px; }
.check { height: 38px; display: flex; align-items: center; gap: 8px; padding-left: 8px; font-size: 15.500px; }
.check span { margin-top: -2px; }
.check i { width: 17px; height: 17px; border: 1px solid #222; border-radius: 1px; background: #fff; }

.canvas { flex: 1; display: flex; justify-content: space-between; }
.board { width: 650px; height: 801px; flex: none; background: #fff; padding: 5px 0 0 6px; }
.selbox { position: relative; width: 638px; height: 196px; border: 2px solid #646464; padding: 11.500px 0 0 7.500px; }
p { height: 18.750px; line-height: 18.750px; white-space: pre; font-size: 14.500px; color: #000; }
.grip { position: absolute; left: 292px; top: 0; width: 50px; height: 11px; border-radius: 0 0 2px 2px; background: linear-gradient(#fff, #fff) 5px 3px / 40px 1px no-repeat, linear-gradient(#fff, #fff) 5px 7px / 40px 1px no-repeat, #646464; }
.boxtools { position: absolute; left: 635px; top: -2px; width: 20px; height: 42px; background: #646464; border-radius: 0 2px 2px 0; display: flex; flex-direction: column; align-items: center; padding: 5px 1px 0 0; gap: 13px; }
.boxtools svg { fill: none; stroke: #fff; stroke-width: 1.500; }
.boxtools b { border: 4px solid transparent; border-top: 4px solid #fff; border-bottom: 0; }

.row1 { height: 145px; display: flex; }
.viz { font-size: 15px; font-weight: 400; color: #333; font-family: "Noto Sans", sans-serif; }
h2 { font: 300 25px/36px Inter, sans-serif; color: #333; padding-left: 10px; }
.profit { width: 472px; margin-left: 6px; padding-top: 6px; }
.profit h2 { padding-left: 4.500px; }
.axis { text-align: center; line-height: 20px; height: 20px; }
.profit .axis { width: 365px; margin: 10px 0 1px 80px; }
.heads { display: flex; height: 20px; line-height: 19px; overflow: hidden; border-bottom: 1px solid #cfcfcf; }
.profit .heads { width: 445px; }
.rowhead { width: 80px; flex: none; padding-left: 5.500px; }
.cat { width: 80px; flex: none; text-align: right; padding-right: 4px; }
.last { width: 45px; text-align: left; padding: 0 0 0 9px; overflow: hidden; }
.vals { display: flex; height: 19px; line-height: 19px; }
.vals .rowhead { border-bottom: 1px solid #cfcfcf; }
.last2 { width: 45px; padding-right: 1px; border-right: 1px solid #cfcfcf; color: #f3cf9b; }
.vtrack { width: 20px; background: #efefef; }
.vals .vtrack { margin-left: 1px; margin-top: -1px; }
.htrack { background: #efefef; height: 20px; width: 365px; margin: 1px 0 0 80px; padding: 8px 0 0 21px; }
.htrack i { display: block; width: 95px; height: 3px; border-radius: 2px; background: #838383; }
.legends { width: 150px; padding: 2px 0 0 2px; font: 400 15px/20px "Noto Sans", sans-serif; }
.ltitle { height: 20px; line-height: 20px; }
.gradient { width: 144px; height: 16px; margin: 6px 0 0 4px; border: 1px solid #a9a18f; position: relative; }
.gradient i { position: absolute; top: 11px; width: 1px; height: 4px; background: #000; }
.g1 { background: linear-gradient(90deg, #e4641f, #fb9a3c 20%, #fdbf72 31%, #d6d5cf 38%, #a9cbab 52%, #54a75a 76%, #1a8b24); }
.g1 i { left: 53px; }
.g2 { background: linear-gradient(90deg, #e99495, #d8d8d8 26%, #a9cbab 42%, #54a75a 70%, #1a8b24); }
.g2 i { left: 37px; }
.range { display: flex; justify-content: space-between; width: 144px; margin: 1px 0 7px 4px; height: 19px; color: #444; }
.range + .ltitle { margin-top: 7px; }

.notes { padding-left: 9.500px; height: 145px; }
.adv { padding-top: 2px; }
.adv .axis { width: 525px; margin: 10px 0 0 86px; }
.adv .heads, .adv .body { margin-left: 6px; }
.adv .heads { width: 605px; }
.mon { width: 60px; flex: none; text-align: center; }
.mon:last-child { width: 45px; text-align: left; padding-left: 5px; overflow: hidden; }
.body { display: flex; height: 189px; }
.grid { width: 605px; border-right: 1px solid #cfcfcf; overflow: hidden; }
.srow { display: flex; height: 21px; line-height: 20px; }
.cell { width: 60px; flex: none; text-align: right; padding-right: 3px; color: #2a2a2a; }
.cell:last-child { width: 45px; padding-right: 1px; }
.body .vtrack { margin-left: 1px; padding: 21px 0 0 8px; }
.vtrack i { display: block; width: 3px; height: 35px; border-radius: 2px; background: #838383; }
.adv .htrack { width: 525px; margin: 1px 0 0 86px; }
.adv .htrack i { width: 358px; }
.pagebar { width: 21px; height: 802px; background: #efefef; border-left: 1px solid #fff; padding: 22px 0 0 8px; }
.pagebar i { display: block; width: 3px; height: 760px; border-radius: 2px; background: #838383; }

.tabs { height: 38px; flex: none; display: grid; grid-template-columns: 163px 242px 250px 183px 120px 229px 216px 189px 121px 111px 32px 32px 32px; background: #e6e6e6; border-top: 1px solid #c4c4c4; border-bottom: 1px solid #cfcfcf; color: #555; font: 400 14px/36px "Noto Sans", sans-serif; }
.tab { display: flex; align-items: center; padding-left: 6.500px; border-right: 1px solid #c9c9c9; overflow: hidden; }
.tab svg { fill: none; stroke: #555; stroke-width: 1.100; }
.tab.data { padding-left: 10px; gap: 5.500px; }
.tab.sheetgrid { padding: 0 0 0 8px; gap: 4px; }
.tab.active { background: #fafafa; font-weight: 700; color: #444; }
.tab.add { padding-left: 8px; }

.status { height: 25px; flex: none; display: grid; grid-template-columns: 1502px 157px 32px 32px 57px 71px 1fr; background: #eaeaea; }
.status > i, .pager { border-right: 1px solid #cfcfcf; }
.status > i:nth-child(4) { border-right-color: #cfcfcf; }
.status > i:nth-child(5) { border-right: 0; }
.pager { display: flex; align-items: center; padding: 0 0 2px 4px; fill: #555; border-left: 1px solid #cfcfcf; }
.views { display: flex; align-items: center; gap: 10px; padding: 0 0 1px 7.500px; }

.taskbar { height: 60px; flex: none; display: flex; align-items: center; background: #1c1c1c; border-top: 1px solid #444; }
.defs { position: absolute; }
.weather { position: relative; width: 40px; height: 40px; margin: 0 287.500px 0 24px; }
.weather svg { margin-top: -1px; }
.bubble { position: absolute; left: 16px; top: -2px; width: 19px; height: 19px; border-radius: 50%; background: #c42b1c; color: #fff; font: 400 13px/19px "Open Sans", sans-serif; text-align: center; }
.start { width: 55px; display: flex; justify-content: center; }
.search { width: 273px; height: 38px; margin: 0 3px 0 5px; border-radius: 19px; background: #f3f3f3; display: flex; align-items: center; color: #555; font: 400 16px/36px "Open Sans", sans-serif; }
.search svg { margin: 0 11px 0 14px; fill: none; stroke: #222; stroke-width: 1.800; }
.search .promo { margin: 0 12px 0 auto; stroke: none; }
.app { position: relative; width: 55px; height: 50px; flex: none; display: flex; align-items: center; justify-content: center; }
.app svg { width: 31px; height: 31px; margin-top: -1px; }
.app.sel { background: #2b2b2b; border: 1px solid #353535; border-radius: 5px; width: 50px; margin: 0 2.500px; }
.dot, .bar { position: absolute; bottom: 1px; left: 50%; width: 8px; height: 4px; margin-left: -4px; border-radius: 2px; background: #9a9a9a; }
.bar { width: 20px; margin-left: -10px; background: #4cc2ff; bottom: 0; }
.tray { display: grid; grid-template-columns: 40px 40px 40px 20px 40px; justify-items: center; align-items: center; margin: -2px 0 0 76px; fill: none; }
.clock { margin-left: auto; margin-right: 23px; padding-bottom: 1px; text-align: right; color: #fff; font: 400 14px/20px "Open Sans", sans-serif; }
</style>
